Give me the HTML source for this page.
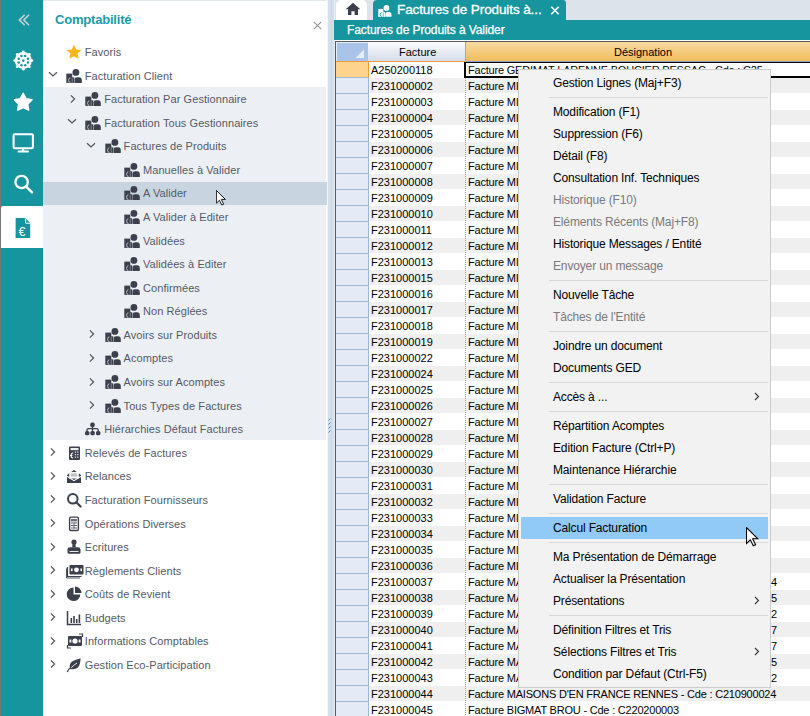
<!DOCTYPE html><html><head><meta charset="utf-8"><style>
*{margin:0;padding:0;box-sizing:border-box}
html,body{width:810px;height:716px;overflow:hidden;background:#fff;font-family:"Liberation Sans", sans-serif;position:relative}
.abs{position:absolute}
.tr{position:absolute;font-size:11px;color:#555965;white-space:nowrap;line-height:16px;letter-spacing:0.07px}
.gr{position:absolute;font-size:11px;color:#000;white-space:nowrap;line-height:16px}
.mi{position:absolute;left:553px;font-size:12px;color:#000;white-space:nowrap;line-height:22px;letter-spacing:-0.15px}
.mi.dis{color:#7a7a7a}
.sep{position:absolute;left:549px;width:219px;height:1px;background:#d7d7d7}
</style></head><body>

<div class="abs" style="left:0;top:0;width:1px;height:716px;background:#777"></div>
<div class="abs" style="left:1px;top:0;width:42px;height:716px;background:#17959e"></div>
<div class="abs" style="left:1px;top:206px;width:42px;height:42px;background:#fff;border-top-left-radius:2px"></div>
<svg class="abs" style="left:0;top:0" width="43" height="250" viewBox="0 0 43 250">
<g fill="none" stroke="#c9d3d6" stroke-width="1.6" stroke-linecap="round">
<path d="M24.2 15.3 L19.4 20 L24.2 24.7"/><path d="M28.6 15.3 L23.8 20 L28.6 24.7"/>
</g>
<g transform="translate(23.3,60.6)" fill="#fff">
<circle r="8.5"/>
<circle cx="8.60" cy="0.00" r="1.4"/><circle cx="6.08" cy="6.08" r="1.4"/><circle cx="0.00" cy="8.60" r="1.4"/><circle cx="-6.08" cy="6.08" r="1.4"/><circle cx="-8.60" cy="0.00" r="1.4"/><circle cx="-6.08" cy="-6.08" r="1.4"/><circle cx="-0.00" cy="-8.60" r="1.4"/><circle cx="6.08" cy="-6.08" r="1.4"/>
<g fill="#17959e"><circle r="1.3"/><circle cx="4.62" cy="1.91" r="1.25"/><circle cx="1.91" cy="4.62" r="1.25"/><circle cx="-1.91" cy="4.62" r="1.25"/><circle cx="-4.62" cy="1.91" r="1.25"/><circle cx="-4.62" cy="-1.91" r="1.25"/><circle cx="-1.91" cy="-4.62" r="1.25"/><circle cx="1.91" cy="-4.62" r="1.25"/><circle cx="4.62" cy="-1.91" r="1.25"/></g>
</g>
<path fill="#fff" stroke="#fff" stroke-width="1.4" stroke-linejoin="round" d="M23.20 93.30 L26.08 98.64 L32.04 99.73 L27.86 104.11 L28.67 110.12 L23.20 107.50 L17.73 110.12 L18.54 104.11 L14.36 99.73 L20.32 98.64 Z"/>
<rect x="13.6" y="134.2" width="19.3" height="14" rx="1.2" fill="none" stroke="#fff" stroke-width="2.1"/>
<rect x="22" y="148" width="2.2" height="3.5" fill="#fff"/>
<rect x="17.5" y="150.6" width="11.5" height="2" rx="1" fill="#fff"/>
<circle cx="21.6" cy="182" r="6.2" fill="none" stroke="#fff" stroke-width="2.3"/>
<line x1="26.2" y1="186.6" x2="32" y2="192.4" stroke="#fff" stroke-width="2.4" stroke-linecap="round"/>
<g>
<path d="M15.6 218 h9.6 l5 5 v15 h-14.6 z" fill="#17959e"/>
<path d="M25.6 218.6 v4.6 h4.6" fill="none" stroke="#fff" stroke-width="1"/>
<text x="18.6" y="236" font-family="Liberation Sans" font-size="12.5" fill="#fff">€</text>
</g>
</svg>
<div class="abs" style="left:55px;top:10.5px;font-size:13px;font-weight:bold;color:#1c9ba8;line-height:18px;letter-spacing:-0.2px">Comptabilité</div>
<div class="abs" style="left:312.5px;top:15.5px;width:9px;height:9px"><svg width="9" height="9"><path d="M0.8 0.8 L8.2 8.2 M8.2 0.8 L0.8 8.2" stroke="#999" stroke-width="1.2"/></svg></div>
<div class="abs" style="left:43px;top:0;width:285px;height:1px;background:#e4e9ee"></div>
<div class="abs" style="left:327px;top:0;width:1px;height:716px;background:#f3f6f9"></div>
<div class="abs" style="left:43px;top:87px;width:283px;height:353px;background:#ecf0f4"></div>
<div class="abs" style="left:43px;top:182px;width:284px;height:23px;background:#c8d5e0"></div>
<svg class="abs" style="left:65.8px;top:44px" width="16" height="16" viewBox="0 0 16 16"><path fill="#fbb316" d="M8 0.8 L10.2 5.6 L15.4 6.1 L11.5 9.6 L12.6 14.8 L8 12.2 L3.4 14.8 L4.5 9.6 L0.6 6.1 L5.8 5.6 Z"/></svg>
<div class="tr" style="left:84.8px;top:44px">Favoris</div>
<svg class="abs" style="left:47.8px;top:71.2px" width="10" height="8"><path d="M1 1.2 L5 5 L9 1.2" fill="none" stroke="#50545f" stroke-width="1.2"/></svg>
<svg class="abs" style="left:65.5px;top:69px" width="17" height="15" viewBox="0 0 17 15">
<circle cx="9.9" cy="3.4" r="3.4" fill="#3c404c"/>
<path d="M8.6 13.9 V10.6 Q8.6 8.3 11 8.3 H13 Q15.8 8.3 15.8 11.5 V13.9 Z" fill="#3c404c"/>
<path d="M0.3 4.6 H6.3 V13.9 H0.3 Z" fill="#3c404c"/>
<path d="M5.6 8.3 H8.3 V13.9 H5.6 Z" fill="#3c404c"/>
<path d="M4.4 8.8 Q2.6 8.9 2.6 11.2 Q2.6 13.4 4.4 13.5" fill="none" stroke="#b9bdc5" stroke-width="1"/>
<path d="M6.2 8.8 V13.9" stroke="#9a9ea8" stroke-width="0.7"/>
</svg>
<div class="tr" style="left:84.8px;top:68px">Facturation Client</div>
<svg class="abs" style="left:68.6px;top:93.7px" width="8" height="10"><path d="M1.9 1.3 L5.6 5 L1.9 8.7" fill="none" stroke="#50545f" stroke-width="1.2"/></svg>
<svg class="abs" style="left:85.0px;top:92px" width="17" height="15" viewBox="0 0 17 15">
<circle cx="9.9" cy="3.4" r="3.4" fill="#3c404c"/>
<path d="M8.6 13.9 V10.6 Q8.6 8.3 11 8.3 H13 Q15.8 8.3 15.8 11.5 V13.9 Z" fill="#3c404c"/>
<path d="M0.3 4.6 H6.3 V13.9 H0.3 Z" fill="#3c404c"/>
<path d="M5.6 8.3 H8.3 V13.9 H5.6 Z" fill="#3c404c"/>
<path d="M4.4 8.8 Q2.6 8.9 2.6 11.2 Q2.6 13.4 4.4 13.5" fill="none" stroke="#b9bdc5" stroke-width="1"/>
<path d="M6.2 8.8 V13.9" stroke="#9a9ea8" stroke-width="0.7"/>
</svg>
<div class="tr" style="left:104.2px;top:91px">Facturation Par Gestionnaire</div>
<svg class="abs" style="left:67.1px;top:118.3px" width="10" height="8"><path d="M1 1.2 L5 5 L9 1.2" fill="none" stroke="#50545f" stroke-width="1.2"/></svg>
<svg class="abs" style="left:85.0px;top:116px" width="17" height="15" viewBox="0 0 17 15">
<circle cx="9.9" cy="3.4" r="3.4" fill="#3c404c"/>
<path d="M8.6 13.9 V10.6 Q8.6 8.3 11 8.3 H13 Q15.8 8.3 15.8 11.5 V13.9 Z" fill="#3c404c"/>
<path d="M0.3 4.6 H6.3 V13.9 H0.3 Z" fill="#3c404c"/>
<path d="M5.6 8.3 H8.3 V13.9 H5.6 Z" fill="#3c404c"/>
<path d="M4.4 8.8 Q2.6 8.9 2.6 11.2 Q2.6 13.4 4.4 13.5" fill="none" stroke="#b9bdc5" stroke-width="1"/>
<path d="M6.2 8.8 V13.9" stroke="#9a9ea8" stroke-width="0.7"/>
</svg>
<div class="tr" style="left:104.2px;top:115px">Facturation Tous Gestionnaires</div>
<svg class="abs" style="left:86.4px;top:141.9px" width="10" height="8"><path d="M1 1.2 L5 5 L9 1.2" fill="none" stroke="#50545f" stroke-width="1.2"/></svg>
<svg class="abs" style="left:104.5px;top:139px" width="17" height="15" viewBox="0 0 17 15">
<circle cx="9.9" cy="3.4" r="3.4" fill="#3c404c"/>
<path d="M8.6 13.9 V10.6 Q8.6 8.3 11 8.3 H13 Q15.8 8.3 15.8 11.5 V13.9 Z" fill="#3c404c"/>
<path d="M0.3 4.6 H6.3 V13.9 H0.3 Z" fill="#3c404c"/>
<path d="M5.6 8.3 H8.3 V13.9 H5.6 Z" fill="#3c404c"/>
<path d="M4.4 8.8 Q2.6 8.9 2.6 11.2 Q2.6 13.4 4.4 13.5" fill="none" stroke="#b9bdc5" stroke-width="1"/>
<path d="M6.2 8.8 V13.9" stroke="#9a9ea8" stroke-width="0.7"/>
</svg>
<div class="tr" style="left:123.6px;top:138px">Factures de Produits</div>
<svg class="abs" style="left:124.0px;top:163px" width="17" height="15" viewBox="0 0 17 15">
<circle cx="9.9" cy="3.4" r="3.4" fill="#3c404c"/>
<path d="M8.6 13.9 V10.6 Q8.6 8.3 11 8.3 H13 Q15.8 8.3 15.8 11.5 V13.9 Z" fill="#3c404c"/>
<path d="M0.3 4.6 H6.3 V13.9 H0.3 Z" fill="#3c404c"/>
<path d="M5.6 8.3 H8.3 V13.9 H5.6 Z" fill="#3c404c"/>
<path d="M4.4 8.8 Q2.6 8.9 2.6 11.2 Q2.6 13.4 4.4 13.5" fill="none" stroke="#b9bdc5" stroke-width="1"/>
<path d="M6.2 8.8 V13.9" stroke="#9a9ea8" stroke-width="0.7"/>
</svg>
<div class="tr" style="left:143.0px;top:162px">Manuelles à Valider</div>
<svg class="abs" style="left:124.0px;top:186px" width="17" height="15" viewBox="0 0 17 15">
<circle cx="9.9" cy="3.4" r="3.4" fill="#3c404c"/>
<path d="M8.6 13.9 V10.6 Q8.6 8.3 11 8.3 H13 Q15.8 8.3 15.8 11.5 V13.9 Z" fill="#3c404c"/>
<path d="M0.3 4.6 H6.3 V13.9 H0.3 Z" fill="#3c404c"/>
<path d="M5.6 8.3 H8.3 V13.9 H5.6 Z" fill="#3c404c"/>
<path d="M4.4 8.8 Q2.6 8.9 2.6 11.2 Q2.6 13.4 4.4 13.5" fill="none" stroke="#b9bdc5" stroke-width="1"/>
<path d="M6.2 8.8 V13.9" stroke="#9a9ea8" stroke-width="0.7"/>
</svg>
<div class="tr" style="left:143.0px;top:185px">A Valider</div>
<svg class="abs" style="left:124.0px;top:210px" width="17" height="15" viewBox="0 0 17 15">
<circle cx="9.9" cy="3.4" r="3.4" fill="#3c404c"/>
<path d="M8.6 13.9 V10.6 Q8.6 8.3 11 8.3 H13 Q15.8 8.3 15.8 11.5 V13.9 Z" fill="#3c404c"/>
<path d="M0.3 4.6 H6.3 V13.9 H0.3 Z" fill="#3c404c"/>
<path d="M5.6 8.3 H8.3 V13.9 H5.6 Z" fill="#3c404c"/>
<path d="M4.4 8.8 Q2.6 8.9 2.6 11.2 Q2.6 13.4 4.4 13.5" fill="none" stroke="#b9bdc5" stroke-width="1"/>
<path d="M6.2 8.8 V13.9" stroke="#9a9ea8" stroke-width="0.7"/>
</svg>
<div class="tr" style="left:143.0px;top:209px">A Valider à Editer</div>
<svg class="abs" style="left:124.0px;top:234px" width="17" height="15" viewBox="0 0 17 15">
<circle cx="9.9" cy="3.4" r="3.4" fill="#3c404c"/>
<path d="M8.6 13.9 V10.6 Q8.6 8.3 11 8.3 H13 Q15.8 8.3 15.8 11.5 V13.9 Z" fill="#3c404c"/>
<path d="M0.3 4.6 H6.3 V13.9 H0.3 Z" fill="#3c404c"/>
<path d="M5.6 8.3 H8.3 V13.9 H5.6 Z" fill="#3c404c"/>
<path d="M4.4 8.8 Q2.6 8.9 2.6 11.2 Q2.6 13.4 4.4 13.5" fill="none" stroke="#b9bdc5" stroke-width="1"/>
<path d="M6.2 8.8 V13.9" stroke="#9a9ea8" stroke-width="0.7"/>
</svg>
<div class="tr" style="left:143.0px;top:233px">Validées</div>
<svg class="abs" style="left:124.0px;top:257px" width="17" height="15" viewBox="0 0 17 15">
<circle cx="9.9" cy="3.4" r="3.4" fill="#3c404c"/>
<path d="M8.6 13.9 V10.6 Q8.6 8.3 11 8.3 H13 Q15.8 8.3 15.8 11.5 V13.9 Z" fill="#3c404c"/>
<path d="M0.3 4.6 H6.3 V13.9 H0.3 Z" fill="#3c404c"/>
<path d="M5.6 8.3 H8.3 V13.9 H5.6 Z" fill="#3c404c"/>
<path d="M4.4 8.8 Q2.6 8.9 2.6 11.2 Q2.6 13.4 4.4 13.5" fill="none" stroke="#b9bdc5" stroke-width="1"/>
<path d="M6.2 8.8 V13.9" stroke="#9a9ea8" stroke-width="0.7"/>
</svg>
<div class="tr" style="left:143.0px;top:256px">Validées à Editer</div>
<svg class="abs" style="left:124.0px;top:281px" width="17" height="15" viewBox="0 0 17 15">
<circle cx="9.9" cy="3.4" r="3.4" fill="#3c404c"/>
<path d="M8.6 13.9 V10.6 Q8.6 8.3 11 8.3 H13 Q15.8 8.3 15.8 11.5 V13.9 Z" fill="#3c404c"/>
<path d="M0.3 4.6 H6.3 V13.9 H0.3 Z" fill="#3c404c"/>
<path d="M5.6 8.3 H8.3 V13.9 H5.6 Z" fill="#3c404c"/>
<path d="M4.4 8.8 Q2.6 8.9 2.6 11.2 Q2.6 13.4 4.4 13.5" fill="none" stroke="#b9bdc5" stroke-width="1"/>
<path d="M6.2 8.8 V13.9" stroke="#9a9ea8" stroke-width="0.7"/>
</svg>
<div class="tr" style="left:143.0px;top:280px">Confirmées</div>
<svg class="abs" style="left:124.0px;top:304px" width="17" height="15" viewBox="0 0 17 15">
<circle cx="9.9" cy="3.4" r="3.4" fill="#3c404c"/>
<path d="M8.6 13.9 V10.6 Q8.6 8.3 11 8.3 H13 Q15.8 8.3 15.8 11.5 V13.9 Z" fill="#3c404c"/>
<path d="M0.3 4.6 H6.3 V13.9 H0.3 Z" fill="#3c404c"/>
<path d="M5.6 8.3 H8.3 V13.9 H5.6 Z" fill="#3c404c"/>
<path d="M4.4 8.8 Q2.6 8.9 2.6 11.2 Q2.6 13.4 4.4 13.5" fill="none" stroke="#b9bdc5" stroke-width="1"/>
<path d="M6.2 8.8 V13.9" stroke="#9a9ea8" stroke-width="0.7"/>
</svg>
<div class="tr" style="left:143.0px;top:303px">Non Réglées</div>
<svg class="abs" style="left:87.9px;top:329.4px" width="8" height="10"><path d="M1.9 1.3 L5.6 5 L1.9 8.7" fill="none" stroke="#50545f" stroke-width="1.2"/></svg>
<svg class="abs" style="left:104.5px;top:328px" width="17" height="15" viewBox="0 0 17 15">
<circle cx="9.9" cy="3.4" r="3.4" fill="#3c404c"/>
<path d="M8.6 13.9 V10.6 Q8.6 8.3 11 8.3 H13 Q15.8 8.3 15.8 11.5 V13.9 Z" fill="#3c404c"/>
<path d="M0.3 4.6 H6.3 V13.9 H0.3 Z" fill="#3c404c"/>
<path d="M5.6 8.3 H8.3 V13.9 H5.6 Z" fill="#3c404c"/>
<path d="M4.4 8.8 Q2.6 8.9 2.6 11.2 Q2.6 13.4 4.4 13.5" fill="none" stroke="#b9bdc5" stroke-width="1"/>
<path d="M6.2 8.8 V13.9" stroke="#9a9ea8" stroke-width="0.7"/>
</svg>
<div class="tr" style="left:123.6px;top:327px">Avoirs sur Produits</div>
<svg class="abs" style="left:87.9px;top:353.0px" width="8" height="10"><path d="M1.9 1.3 L5.6 5 L1.9 8.7" fill="none" stroke="#50545f" stroke-width="1.2"/></svg>
<svg class="abs" style="left:104.5px;top:351px" width="17" height="15" viewBox="0 0 17 15">
<circle cx="9.9" cy="3.4" r="3.4" fill="#3c404c"/>
<path d="M8.6 13.9 V10.6 Q8.6 8.3 11 8.3 H13 Q15.8 8.3 15.8 11.5 V13.9 Z" fill="#3c404c"/>
<path d="M0.3 4.6 H6.3 V13.9 H0.3 Z" fill="#3c404c"/>
<path d="M5.6 8.3 H8.3 V13.9 H5.6 Z" fill="#3c404c"/>
<path d="M4.4 8.8 Q2.6 8.9 2.6 11.2 Q2.6 13.4 4.4 13.5" fill="none" stroke="#b9bdc5" stroke-width="1"/>
<path d="M6.2 8.8 V13.9" stroke="#9a9ea8" stroke-width="0.7"/>
</svg>
<div class="tr" style="left:123.6px;top:350px">Acomptes</div>
<svg class="abs" style="left:87.9px;top:376.6px" width="8" height="10"><path d="M1.9 1.3 L5.6 5 L1.9 8.7" fill="none" stroke="#50545f" stroke-width="1.2"/></svg>
<svg class="abs" style="left:104.5px;top:375px" width="17" height="15" viewBox="0 0 17 15">
<circle cx="9.9" cy="3.4" r="3.4" fill="#3c404c"/>
<path d="M8.6 13.9 V10.6 Q8.6 8.3 11 8.3 H13 Q15.8 8.3 15.8 11.5 V13.9 Z" fill="#3c404c"/>
<path d="M0.3 4.6 H6.3 V13.9 H0.3 Z" fill="#3c404c"/>
<path d="M5.6 8.3 H8.3 V13.9 H5.6 Z" fill="#3c404c"/>
<path d="M4.4 8.8 Q2.6 8.9 2.6 11.2 Q2.6 13.4 4.4 13.5" fill="none" stroke="#b9bdc5" stroke-width="1"/>
<path d="M6.2 8.8 V13.9" stroke="#9a9ea8" stroke-width="0.7"/>
</svg>
<div class="tr" style="left:123.6px;top:374px">Avoirs sur Acomptes</div>
<svg class="abs" style="left:87.9px;top:400.1px" width="8" height="10"><path d="M1.9 1.3 L5.6 5 L1.9 8.7" fill="none" stroke="#50545f" stroke-width="1.2"/></svg>
<svg class="abs" style="left:104.5px;top:399px" width="17" height="15" viewBox="0 0 17 15">
<circle cx="9.9" cy="3.4" r="3.4" fill="#3c404c"/>
<path d="M8.6 13.9 V10.6 Q8.6 8.3 11 8.3 H13 Q15.8 8.3 15.8 11.5 V13.9 Z" fill="#3c404c"/>
<path d="M0.3 4.6 H6.3 V13.9 H0.3 Z" fill="#3c404c"/>
<path d="M5.6 8.3 H8.3 V13.9 H5.6 Z" fill="#3c404c"/>
<path d="M4.4 8.8 Q2.6 8.9 2.6 11.2 Q2.6 13.4 4.4 13.5" fill="none" stroke="#b9bdc5" stroke-width="1"/>
<path d="M6.2 8.8 V13.9" stroke="#9a9ea8" stroke-width="0.7"/>
</svg>
<div class="tr" style="left:123.6px;top:398px">Tous Types de Factures</div>
<svg class="abs" style="left:85.3px;top:421px" width="16" height="16" viewBox="0 0 16 16" fill="#3c404c"><rect x="5.3" y="1.6" width="4.4" height="4.4" rx="1.6"/><rect x="0" y="9.9" width="4.4" height="4.4" rx="1.6"/><rect x="5.4" y="9.9" width="4.4" height="4.4" rx="1.6"/><rect x="11" y="9.9" width="4.4" height="4.4" rx="1.6"/><path d="M7.5 5 V10 M2 10.5 V9 Q2 7.6 3.4 7.6 H11.8 Q13.2 7.6 13.2 9 V10.5" stroke="#3c404c" stroke-width="1.3" fill="none"/></svg>
<div class="tr" style="left:104.2px;top:421px">Hiérarchies Défaut Factures</div>
<svg class="abs" style="left:49.3px;top:447.3px" width="8" height="10"><path d="M1.9 1.3 L5.6 5 L1.9 8.7" fill="none" stroke="#50545f" stroke-width="1.2"/></svg>
<svg class="abs" style="left:65.8px;top:445px" width="16" height="16" viewBox="0 0 16 16" fill="#3c404c"><rect x="3" y="1.5" width="11" height="13.5" rx="1"/><rect x="4.5" y="3" width="8" height="2.2" fill="#fff" opacity="0.9"/><g fill="#fff" opacity="0.85"><rect x="8.8" y="6.5" width="1.3" height="1.3"/><rect x="11.2" y="6.5" width="1.3" height="1.3"/><rect x="8.8" y="9" width="1.3" height="1.3"/><rect x="11.2" y="9" width="1.3" height="1.3"/><rect x="8.8" y="11.5" width="1.3" height="1.3"/><rect x="11.2" y="11.5" width="1.3" height="1.3"/></g><path d="M7.2 8 Q5 8 5 10.5 Q5 13 7.2 13" stroke="#fff" fill="none" stroke-width="1.1"/><rect x="4" y="10" width="2.5" height="0.9" fill="#fff"/></svg>
<div class="tr" style="left:84.8px;top:445px">Relevés de Factures</div>
<svg class="abs" style="left:49.3px;top:470.8px" width="8" height="10"><path d="M1.9 1.3 L5.6 5 L1.9 8.7" fill="none" stroke="#50545f" stroke-width="1.2"/></svg>
<svg class="abs" style="left:65.8px;top:468px" width="16" height="16" viewBox="0 0 16 16"><path d="M1 7 L8 2 L15 7 V15 H1 Z" fill="#3c404c"/><rect x="3.2" y="4" width="9.6" height="6.5" fill="#fff"/><rect x="4.8" y="5.6" width="6.4" height="1" fill="#999"/><rect x="4.8" y="7.4" width="6.4" height="1" fill="#999"/><path d="M1 8.2 L8 12.6 L15 8.2" stroke="#fff" fill="none" stroke-width="1.1"/></svg>
<div class="tr" style="left:84.8px;top:468px">Relances</div>
<svg class="abs" style="left:49.3px;top:494.4px" width="8" height="10"><path d="M1.9 1.3 L5.6 5 L1.9 8.7" fill="none" stroke="#50545f" stroke-width="1.2"/></svg>
<svg class="abs" style="left:65.8px;top:492px" width="16" height="16" viewBox="0 0 16 16"><circle cx="6.8" cy="6.8" r="4.8" fill="none" stroke="#3c404c" stroke-width="2"/><line x1="10.3" y1="10.3" x2="14.5" y2="14.5" stroke="#3c404c" stroke-width="2.2" stroke-linecap="round"/></svg>
<div class="tr" style="left:84.8px;top:492px">Facturation Fournisseurs</div>
<svg class="abs" style="left:49.3px;top:518.0px" width="8" height="10"><path d="M1.9 1.3 L5.6 5 L1.9 8.7" fill="none" stroke="#50545f" stroke-width="1.2"/></svg>
<svg class="abs" style="left:65.8px;top:516px" width="16" height="16" viewBox="0 0 16 16"><rect x="3.6" y="1.1" width="8.8" height="13.4" rx="1.2" fill="none" stroke="#3c404c" stroke-width="1.4"/><rect x="5" y="3" width="6" height="2.4" fill="#3c404c" opacity="0.75"/><g fill="#3c404c" opacity="0.8"><rect x="5" y="6.5" width="6" height="1"/><rect x="5" y="9" width="6" height="1"/><rect x="5" y="11.5" width="6" height="1"/><rect x="7.5" y="6.5" width="1" height="6"/></g></svg>
<div class="tr" style="left:84.8px;top:516px">Opérations Diverses</div>
<svg class="abs" style="left:49.3px;top:541.6px" width="8" height="10"><path d="M1.9 1.3 L5.6 5 L1.9 8.7" fill="none" stroke="#50545f" stroke-width="1.2"/></svg>
<svg class="abs" style="left:65.8px;top:539px" width="16" height="16" viewBox="0 0 16 16" fill="#3c404c"><circle cx="8" cy="3" r="2.6"/><path d="M6.6 4.5 H9.4 L9.8 8.6 H6.2 Z"/><path d="M1.5 10.5 Q1.5 8.3 4 8.3 H12 Q14.5 8.3 14.5 10.5 V13.5 Q14.5 14.8 13 14.8 H3 Q1.5 14.8 1.5 13.5 Z"/><rect x="3.5" y="12" width="9" height="0.9" fill="#fff"/></svg>
<div class="tr" style="left:84.8px;top:539px">Ecritures</div>
<svg class="abs" style="left:49.3px;top:565.1px" width="8" height="10"><path d="M1.9 1.3 L5.6 5 L1.9 8.7" fill="none" stroke="#50545f" stroke-width="1.2"/></svg>
<svg class="abs" style="left:65.8px;top:563px" width="18" height="16" viewBox="0 0 18 16" fill="#3c404c"><rect x="3.5" y="2" width="14" height="9.5" rx="0.8"/><circle cx="10.5" cy="6.8" r="2.4" fill="#fff"/><rect x="5" y="5.5" width="1.6" height="2.6" fill="#fff"/><rect x="14.4" y="5.5" width="1.6" height="2.6" fill="#fff"/><path d="M1.5 4 V13.5 H15.5" fill="none" stroke="#3c404c" stroke-width="1.2"/><path d="M0.5 5.5 V15 H14" fill="none" stroke="#3c404c" stroke-width="0.9"/></svg>
<div class="tr" style="left:84.8px;top:563px">Règlements Clients</div>
<svg class="abs" style="left:49.3px;top:588.7px" width="8" height="10"><path d="M1.9 1.3 L5.6 5 L1.9 8.7" fill="none" stroke="#50545f" stroke-width="1.2"/></svg>
<svg class="abs" style="left:65.8px;top:586px" width="16" height="16" viewBox="0 0 16 16" fill="#3c404c"><path d="M7.5 1.5 A6.8 6.8 0 1 0 14.3 8.5 H7.5 Z"/><path d="M9 0.5 A6.5 6.5 0 0 1 15.5 7 H9 Z"/></svg>
<div class="tr" style="left:84.8px;top:586px">Coûts de Revient</div>
<svg class="abs" style="left:49.3px;top:612.3px" width="8" height="10"><path d="M1.9 1.3 L5.6 5 L1.9 8.7" fill="none" stroke="#50545f" stroke-width="1.2"/></svg>
<svg class="abs" style="left:65.8px;top:610px" width="16" height="16" viewBox="0 0 16 16" fill="#3c404c"><path d="M1.5 1 V14.5 H15" fill="none" stroke="#3c404c" stroke-width="1.5"/><rect x="4.5" y="8" width="1.6" height="5"/><rect x="7.2" y="6" width="1.6" height="7"/><rect x="9.9" y="9" width="1.6" height="4"/><rect x="12.6" y="4.5" width="1.6" height="8.5"/></svg>
<div class="tr" style="left:84.8px;top:610px">Budgets</div>
<svg class="abs" style="left:49.3px;top:635.9px" width="8" height="10"><path d="M1.9 1.3 L5.6 5 L1.9 8.7" fill="none" stroke="#50545f" stroke-width="1.2"/></svg>
<svg class="abs" style="left:65.8px;top:633px" width="18" height="16" viewBox="0 0 18 16" fill="#3c404c"><rect x="2" y="3" width="14" height="10" rx="1"/><circle cx="9" cy="8" r="2.6" fill="#fff"/><rect x="3.5" y="6.5" width="1.8" height="3" fill="#fff"/><rect x="12.7" y="6.5" width="1.8" height="3" fill="#fff"/><path d="M13 1 L16.5 1 L16.5 4" stroke="#3c404c" fill="none" stroke-width="1.2"/><path d="M5 15 L1.5 15 L1.5 12" stroke="#3c404c" fill="none" stroke-width="1.2"/></svg>
<div class="tr" style="left:84.8px;top:633px">Informations Comptables</div>
<svg class="abs" style="left:49.3px;top:659.4px" width="8" height="10"><path d="M1.9 1.3 L5.6 5 L1.9 8.7" fill="none" stroke="#50545f" stroke-width="1.2"/></svg>
<svg class="abs" style="left:65.8px;top:657px" width="16" height="16" viewBox="0 0 16 16" fill="#3c404c"><path d="M4 12 Q2.5 6 7.5 3.8 Q10.5 2.6 14.5 1.5 Q14.5 7.5 12 10.2 Q9 13.2 4 12 Z"/><path d="M1.2 15 Q4 9.5 11 5.5" stroke="#3c404c" stroke-width="1.3" fill="none"/><path d="M5.2 10.8 Q7.5 8.2 11 6" stroke="#fff" stroke-width="0.9" fill="none"/></svg>
<div class="tr" style="left:84.8px;top:657px">Gestion Eco-Participation</div>
<div class="abs" style="left:328px;top:0;width:7px;height:716px;background:#d7dfe8"></div>
<div class="abs" style="left:331px;top:0;width:1px;height:716px;background:#c4daf4"></div>
<div class="abs" style="left:334px;top:0;width:1px;height:716px;background:#e8edf2"></div>
<svg class="abs" style="left:328px;top:418px" width="4" height="16"><path d="M0.5 2.5 L2.5 0.5" stroke="#3c7fe0" stroke-width="1"/><path d="M0.5 6.5 L2.5 4.5" stroke="#3c7fe0" stroke-width="1"/><path d="M0.5 10.5 L2.5 8.5" stroke="#3c7fe0" stroke-width="1"/><path d="M0.5 14.5 L2.5 12.5" stroke="#3c7fe0" stroke-width="1"/></svg>
<div class="abs" style="left:335px;top:0;width:475px;height:20px;background:#dce3eb"></div>
<div class="abs" style="left:336px;top:0;width:31px;height:20px;background:#fff;border-radius:5px 5px 0 0"></div>
<svg class="abs" style="left:345px;top:2px" width="16" height="14" viewBox="0 0 16 14"><path d="M8 0.8 L15.3 7.2 H13 V13 H9.6 V9.3 H6.4 V13 H3 V7.2 H0.7 Z" fill="#3c404c"/></svg>
<div class="abs" style="left:373px;top:0;width:193px;height:21px;background:#17959e;border-radius:4px 3px 0 0"></div>
<svg class="abs" style="left:378px;top:5px" width="14.5" height="12.8" viewBox="0 0 17 15"><circle cx="9.9" cy="3.4" r="3.4" fill="#fff"/><path d="M8.6 13.9 V10.6 Q8.6 8.3 11 8.3 H13 Q15.8 8.3 15.8 11.5 V13.9 Z" fill="#fff"/><path d="M0.3 4.6 H6.3 V13.9 H0.3 Z" fill="#fff"/><path d="M5.6 8.3 H8.3 V13.9 H5.6 Z" fill="#fff"/><path d="M4.4 8.8 Q2.6 8.9 2.6 11.2 Q2.6 13.4 4.4 13.5" fill="none" stroke="#17959e" stroke-width="1"/><path d="M6.2 8.8 V13.9" stroke="#17959e" stroke-width="0.7"/></svg>
<div class="abs" style="left:397px;top:1px;font-size:13.5px;color:#fff;line-height:18px;white-space:nowrap;letter-spacing:-0.1px;-webkit-text-stroke:0.3px #fff">Factures de Produits à...</div>
<svg class="abs" style="left:550px;top:6px" width="10" height="9"><path d="M1.3 0.8 L8.7 8.2 M8.7 0.8 L1.3 8.2" stroke="#fff" stroke-width="1.5"/></svg>
<div class="abs" style="left:334px;top:20px;width:476px;height:20px;background:#17959e"></div>
<div class="abs" style="left:347px;top:22px;font-size:12px;color:#fff;line-height:16px;white-space:nowrap;letter-spacing:-0.1px;-webkit-text-stroke:0.25px #fff">Factures de Produits à Valider</div>
<div class="abs" style="left:335px;top:40px;width:475px;height:676px;background:#fff"></div>
<div class="abs" style="left:335px;top:41px;width:475px;height:1px;background:#5a5a5a"></div>
<div class="abs" style="left:335px;top:41px;width:1px;height:675px;background:#5a5a5a"></div>
<div class="abs" style="left:336px;top:42px;width:32px;height:19px;background:#a9c4e8;border-top:1px solid #e6eefa;border-left:1px solid #e6eefa"></div>
<svg class="abs" style="left:355px;top:49px" width="10" height="10"><path d="M9 0.5 V9 H0.5 Z" fill="#e8eef8"/></svg>
<div class="abs" style="left:368px;top:42px;width:97px;height:19px;background:linear-gradient(#fbfcfd,#d3dce8)"></div>
<div class="abs" style="left:336px;top:61px;width:130px;height:1px;background:#f29a3a"></div>
<div class="abs" style="left:465px;top:42px;width:1px;height:20px;background:#f29a3a"></div>
<div class="abs" style="left:466px;top:42px;width:344px;height:19px;background:linear-gradient(#f9d9a0,#efbd5e)"></div>
<div class="abs" style="left:466px;top:61px;width:344px;height:1px;background:#87a2c0"></div>
<div class="gr" style="left:399px;top:44px">Facture</div>
<div class="gr" style="left:614px;top:44px">Désignation</div>
<div class="abs" style="left:336px;top:62px;width:33px;height:16px;background:#fdd38d;border-right:1px solid #f29a3a;border-bottom:1px solid #9fb8d3"></div>
<div class="gr" style="left:371px;top:62px">A250200118</div>
<div class="gr" style="left:468px;top:62px;letter-spacing:-0.2px">Facture GEDIMAT LARENNE BOUCIER PESSAC - Cde : C25</div>
<div class="abs" style="left:368px;top:78px;width:442px;height:15px;background:#efefef"></div>
<div class="abs" style="left:336px;top:78px;width:33px;height:16px;background:#e4ebf7;border-right:1px solid #9fb8d3;border-bottom:1px solid #9fb8d3"></div>
<div class="gr" style="left:371px;top:78px">F231000002</div>
<div class="gr" style="left:468px;top:78px;letter-spacing:-0.2px">Facture MI</div>
<div class="abs" style="left:336px;top:94px;width:33px;height:16px;background:#e4ebf7;border-right:1px solid #9fb8d3;border-bottom:1px solid #9fb8d3"></div>
<div class="gr" style="left:371px;top:94px">F231000003</div>
<div class="gr" style="left:468px;top:94px;letter-spacing:-0.2px">Facture MI</div>
<div class="abs" style="left:368px;top:110px;width:442px;height:15px;background:#efefef"></div>
<div class="abs" style="left:336px;top:110px;width:33px;height:16px;background:#e4ebf7;border-right:1px solid #9fb8d3;border-bottom:1px solid #9fb8d3"></div>
<div class="gr" style="left:371px;top:110px">F231000004</div>
<div class="gr" style="left:468px;top:110px;letter-spacing:-0.2px">Facture MI</div>
<div class="abs" style="left:336px;top:126px;width:33px;height:16px;background:#e4ebf7;border-right:1px solid #9fb8d3;border-bottom:1px solid #9fb8d3"></div>
<div class="gr" style="left:371px;top:126px">F231000005</div>
<div class="gr" style="left:468px;top:126px;letter-spacing:-0.2px">Facture MI</div>
<div class="abs" style="left:368px;top:142px;width:442px;height:15px;background:#efefef"></div>
<div class="abs" style="left:336px;top:142px;width:33px;height:16px;background:#e4ebf7;border-right:1px solid #9fb8d3;border-bottom:1px solid #9fb8d3"></div>
<div class="gr" style="left:371px;top:142px">F231000006</div>
<div class="gr" style="left:468px;top:142px;letter-spacing:-0.2px">Facture MI</div>
<div class="abs" style="left:336px;top:158px;width:33px;height:16px;background:#e4ebf7;border-right:1px solid #9fb8d3;border-bottom:1px solid #9fb8d3"></div>
<div class="gr" style="left:371px;top:158px">F231000007</div>
<div class="gr" style="left:468px;top:158px;letter-spacing:-0.2px">Facture MI</div>
<div class="abs" style="left:368px;top:174px;width:442px;height:15px;background:#efefef"></div>
<div class="abs" style="left:336px;top:174px;width:33px;height:16px;background:#e4ebf7;border-right:1px solid #9fb8d3;border-bottom:1px solid #9fb8d3"></div>
<div class="gr" style="left:371px;top:174px">F231000008</div>
<div class="gr" style="left:468px;top:174px;letter-spacing:-0.2px">Facture MI</div>
<div class="abs" style="left:336px;top:190px;width:33px;height:16px;background:#e4ebf7;border-right:1px solid #9fb8d3;border-bottom:1px solid #9fb8d3"></div>
<div class="gr" style="left:371px;top:190px">F231000009</div>
<div class="gr" style="left:468px;top:190px;letter-spacing:-0.2px">Facture MI</div>
<div class="abs" style="left:368px;top:206px;width:442px;height:15px;background:#efefef"></div>
<div class="abs" style="left:336px;top:206px;width:33px;height:16px;background:#e4ebf7;border-right:1px solid #9fb8d3;border-bottom:1px solid #9fb8d3"></div>
<div class="gr" style="left:371px;top:206px">F231000010</div>
<div class="gr" style="left:468px;top:206px;letter-spacing:-0.2px">Facture MI</div>
<div class="abs" style="left:336px;top:222px;width:33px;height:16px;background:#e4ebf7;border-right:1px solid #9fb8d3;border-bottom:1px solid #9fb8d3"></div>
<div class="gr" style="left:371px;top:222px">F231000011</div>
<div class="gr" style="left:468px;top:222px;letter-spacing:-0.2px">Facture MI</div>
<div class="abs" style="left:368px;top:238px;width:442px;height:15px;background:#efefef"></div>
<div class="abs" style="left:336px;top:238px;width:33px;height:16px;background:#e4ebf7;border-right:1px solid #9fb8d3;border-bottom:1px solid #9fb8d3"></div>
<div class="gr" style="left:371px;top:238px">F231000012</div>
<div class="gr" style="left:468px;top:238px;letter-spacing:-0.2px">Facture MI</div>
<div class="abs" style="left:336px;top:254px;width:33px;height:16px;background:#e4ebf7;border-right:1px solid #9fb8d3;border-bottom:1px solid #9fb8d3"></div>
<div class="gr" style="left:371px;top:254px">F231000013</div>
<div class="gr" style="left:468px;top:254px;letter-spacing:-0.2px">Facture MI</div>
<div class="abs" style="left:368px;top:270px;width:442px;height:15px;background:#efefef"></div>
<div class="abs" style="left:336px;top:270px;width:33px;height:16px;background:#e4ebf7;border-right:1px solid #9fb8d3;border-bottom:1px solid #9fb8d3"></div>
<div class="gr" style="left:371px;top:270px">F231000015</div>
<div class="gr" style="left:468px;top:270px;letter-spacing:-0.2px">Facture MI</div>
<div class="abs" style="left:336px;top:286px;width:33px;height:16px;background:#e4ebf7;border-right:1px solid #9fb8d3;border-bottom:1px solid #9fb8d3"></div>
<div class="gr" style="left:371px;top:286px">F231000016</div>
<div class="gr" style="left:468px;top:286px;letter-spacing:-0.2px">Facture MI</div>
<div class="abs" style="left:368px;top:302px;width:442px;height:15px;background:#efefef"></div>
<div class="abs" style="left:336px;top:302px;width:33px;height:16px;background:#e4ebf7;border-right:1px solid #9fb8d3;border-bottom:1px solid #9fb8d3"></div>
<div class="gr" style="left:371px;top:302px">F231000017</div>
<div class="gr" style="left:468px;top:302px;letter-spacing:-0.2px">Facture MI</div>
<div class="abs" style="left:336px;top:318px;width:33px;height:16px;background:#e4ebf7;border-right:1px solid #9fb8d3;border-bottom:1px solid #9fb8d3"></div>
<div class="gr" style="left:371px;top:318px">F231000018</div>
<div class="gr" style="left:468px;top:318px;letter-spacing:-0.2px">Facture MI</div>
<div class="abs" style="left:368px;top:334px;width:442px;height:15px;background:#efefef"></div>
<div class="abs" style="left:336px;top:334px;width:33px;height:16px;background:#e4ebf7;border-right:1px solid #9fb8d3;border-bottom:1px solid #9fb8d3"></div>
<div class="gr" style="left:371px;top:334px">F231000019</div>
<div class="gr" style="left:468px;top:334px;letter-spacing:-0.2px">Facture MI</div>
<div class="abs" style="left:336px;top:350px;width:33px;height:16px;background:#e4ebf7;border-right:1px solid #9fb8d3;border-bottom:1px solid #9fb8d3"></div>
<div class="gr" style="left:371px;top:350px">F231000022</div>
<div class="gr" style="left:468px;top:350px;letter-spacing:-0.2px">Facture MI</div>
<div class="abs" style="left:368px;top:366px;width:442px;height:15px;background:#efefef"></div>
<div class="abs" style="left:336px;top:366px;width:33px;height:16px;background:#e4ebf7;border-right:1px solid #9fb8d3;border-bottom:1px solid #9fb8d3"></div>
<div class="gr" style="left:371px;top:366px">F231000024</div>
<div class="gr" style="left:468px;top:366px;letter-spacing:-0.2px">Facture MI</div>
<div class="abs" style="left:336px;top:382px;width:33px;height:16px;background:#e4ebf7;border-right:1px solid #9fb8d3;border-bottom:1px solid #9fb8d3"></div>
<div class="gr" style="left:371px;top:382px">F231000025</div>
<div class="gr" style="left:468px;top:382px;letter-spacing:-0.2px">Facture MI</div>
<div class="abs" style="left:368px;top:398px;width:442px;height:15px;background:#efefef"></div>
<div class="abs" style="left:336px;top:398px;width:33px;height:16px;background:#e4ebf7;border-right:1px solid #9fb8d3;border-bottom:1px solid #9fb8d3"></div>
<div class="gr" style="left:371px;top:398px">F231000026</div>
<div class="gr" style="left:468px;top:398px;letter-spacing:-0.2px">Facture MI</div>
<div class="abs" style="left:336px;top:414px;width:33px;height:16px;background:#e4ebf7;border-right:1px solid #9fb8d3;border-bottom:1px solid #9fb8d3"></div>
<div class="gr" style="left:371px;top:414px">F231000027</div>
<div class="gr" style="left:468px;top:414px;letter-spacing:-0.2px">Facture MI</div>
<div class="abs" style="left:368px;top:430px;width:442px;height:15px;background:#efefef"></div>
<div class="abs" style="left:336px;top:430px;width:33px;height:16px;background:#e4ebf7;border-right:1px solid #9fb8d3;border-bottom:1px solid #9fb8d3"></div>
<div class="gr" style="left:371px;top:430px">F231000028</div>
<div class="gr" style="left:468px;top:430px;letter-spacing:-0.2px">Facture MI</div>
<div class="abs" style="left:336px;top:446px;width:33px;height:16px;background:#e4ebf7;border-right:1px solid #9fb8d3;border-bottom:1px solid #9fb8d3"></div>
<div class="gr" style="left:371px;top:446px">F231000029</div>
<div class="gr" style="left:468px;top:446px;letter-spacing:-0.2px">Facture MI</div>
<div class="abs" style="left:368px;top:462px;width:442px;height:15px;background:#efefef"></div>
<div class="abs" style="left:336px;top:462px;width:33px;height:16px;background:#e4ebf7;border-right:1px solid #9fb8d3;border-bottom:1px solid #9fb8d3"></div>
<div class="gr" style="left:371px;top:462px">F231000030</div>
<div class="gr" style="left:468px;top:462px;letter-spacing:-0.2px">Facture MI</div>
<div class="abs" style="left:336px;top:478px;width:33px;height:16px;background:#e4ebf7;border-right:1px solid #9fb8d3;border-bottom:1px solid #9fb8d3"></div>
<div class="gr" style="left:371px;top:478px">F231000031</div>
<div class="gr" style="left:468px;top:478px;letter-spacing:-0.2px">Facture MI</div>
<div class="abs" style="left:368px;top:494px;width:442px;height:15px;background:#efefef"></div>
<div class="abs" style="left:336px;top:494px;width:33px;height:16px;background:#e4ebf7;border-right:1px solid #9fb8d3;border-bottom:1px solid #9fb8d3"></div>
<div class="gr" style="left:371px;top:494px">F231000032</div>
<div class="gr" style="left:468px;top:494px;letter-spacing:-0.2px">Facture MI</div>
<div class="abs" style="left:336px;top:510px;width:33px;height:16px;background:#e4ebf7;border-right:1px solid #9fb8d3;border-bottom:1px solid #9fb8d3"></div>
<div class="gr" style="left:371px;top:510px">F231000033</div>
<div class="gr" style="left:468px;top:510px;letter-spacing:-0.2px">Facture MI</div>
<div class="abs" style="left:368px;top:526px;width:442px;height:15px;background:#efefef"></div>
<div class="abs" style="left:336px;top:526px;width:33px;height:16px;background:#e4ebf7;border-right:1px solid #9fb8d3;border-bottom:1px solid #9fb8d3"></div>
<div class="gr" style="left:371px;top:526px">F231000034</div>
<div class="gr" style="left:468px;top:526px;letter-spacing:-0.2px">Facture MI</div>
<div class="abs" style="left:336px;top:542px;width:33px;height:16px;background:#e4ebf7;border-right:1px solid #9fb8d3;border-bottom:1px solid #9fb8d3"></div>
<div class="gr" style="left:371px;top:542px">F231000035</div>
<div class="gr" style="left:468px;top:542px;letter-spacing:-0.2px">Facture MI</div>
<div class="abs" style="left:368px;top:558px;width:442px;height:15px;background:#efefef"></div>
<div class="abs" style="left:336px;top:558px;width:33px;height:16px;background:#e4ebf7;border-right:1px solid #9fb8d3;border-bottom:1px solid #9fb8d3"></div>
<div class="gr" style="left:371px;top:558px">F231000036</div>
<div class="gr" style="left:468px;top:558px;letter-spacing:-0.2px">Facture MI</div>
<div class="abs" style="left:336px;top:574px;width:33px;height:16px;background:#e4ebf7;border-right:1px solid #9fb8d3;border-bottom:1px solid #9fb8d3"></div>
<div class="gr" style="left:371px;top:574px">F231000037</div>
<div class="gr" style="left:468px;top:574px;letter-spacing:-0.2px">Facture MA</div>
<div class="gr" style="left:771px;top:574px">4</div>
<div class="abs" style="left:368px;top:590px;width:442px;height:15px;background:#efefef"></div>
<div class="abs" style="left:336px;top:590px;width:33px;height:16px;background:#e4ebf7;border-right:1px solid #9fb8d3;border-bottom:1px solid #9fb8d3"></div>
<div class="gr" style="left:371px;top:590px">F231000038</div>
<div class="gr" style="left:468px;top:590px;letter-spacing:-0.2px">Facture MA</div>
<div class="gr" style="left:771px;top:590px">5</div>
<div class="abs" style="left:336px;top:606px;width:33px;height:16px;background:#e4ebf7;border-right:1px solid #9fb8d3;border-bottom:1px solid #9fb8d3"></div>
<div class="gr" style="left:371px;top:606px">F231000039</div>
<div class="gr" style="left:468px;top:606px;letter-spacing:-0.2px">Facture MA</div>
<div class="gr" style="left:771px;top:606px">2</div>
<div class="abs" style="left:368px;top:622px;width:442px;height:15px;background:#efefef"></div>
<div class="abs" style="left:336px;top:622px;width:33px;height:16px;background:#e4ebf7;border-right:1px solid #9fb8d3;border-bottom:1px solid #9fb8d3"></div>
<div class="gr" style="left:371px;top:622px">F231000040</div>
<div class="gr" style="left:468px;top:622px;letter-spacing:-0.2px">Facture MA</div>
<div class="gr" style="left:771px;top:622px">7</div>
<div class="abs" style="left:336px;top:638px;width:33px;height:16px;background:#e4ebf7;border-right:1px solid #9fb8d3;border-bottom:1px solid #9fb8d3"></div>
<div class="gr" style="left:371px;top:638px">F231000041</div>
<div class="gr" style="left:468px;top:638px;letter-spacing:-0.2px">Facture MA</div>
<div class="gr" style="left:771px;top:638px">7</div>
<div class="abs" style="left:368px;top:654px;width:442px;height:15px;background:#efefef"></div>
<div class="abs" style="left:336px;top:654px;width:33px;height:16px;background:#e4ebf7;border-right:1px solid #9fb8d3;border-bottom:1px solid #9fb8d3"></div>
<div class="gr" style="left:371px;top:654px">F231000042</div>
<div class="gr" style="left:468px;top:654px;letter-spacing:-0.2px">Facture MA</div>
<div class="gr" style="left:771px;top:654px">5</div>
<div class="abs" style="left:336px;top:670px;width:33px;height:16px;background:#e4ebf7;border-right:1px solid #9fb8d3;border-bottom:1px solid #9fb8d3"></div>
<div class="gr" style="left:371px;top:670px">F231000043</div>
<div class="gr" style="left:468px;top:670px;letter-spacing:-0.2px">Facture MA</div>
<div class="gr" style="left:771px;top:670px">2</div>
<div class="abs" style="left:368px;top:686px;width:442px;height:15px;background:#efefef"></div>
<div class="abs" style="left:336px;top:686px;width:33px;height:16px;background:#e4ebf7;border-right:1px solid #9fb8d3;border-bottom:1px solid #9fb8d3"></div>
<div class="gr" style="left:371px;top:686px">F231000044</div>
<div class="gr" style="left:468px;top:686px;letter-spacing:-0.2px">Facture MAISONS D'EN FRANCE RENNES - Cde : C210900024</div>
<div class="abs" style="left:336px;top:702px;width:33px;height:16px;background:#e4ebf7;border-right:1px solid #9fb8d3;border-bottom:1px solid #9fb8d3"></div>
<div class="gr" style="left:371px;top:702px">F231000045</div>
<div class="gr" style="left:468px;top:702px;letter-spacing:-0.2px">Facture BIGMAT BROU - Cde : C220200003</div>
<div class="abs" style="left:465px;top:78px;width:1px;height:638px;background:repeating-linear-gradient(#a0a0a0 0 1px,transparent 1px 2px)"></div>
<div class="abs" style="left:464px;top:62px;width:346px;height:1px;background:#000"></div>
<div class="abs" style="left:464px;top:62px;width:2px;height:16px;background:#000"></div>
<div class="abs" style="left:464px;top:76px;width:346px;height:2px;background:#000"></div>
<div class="abs" style="left:520px;top:71px;width:255px;height:621px;background:rgba(0,0,0,0.0);border-radius:1px"></div>
<div class="abs" style="left:518px;top:69px;width:253px;height:619px;background:#f2f2f2;border:1px solid #cccccc"></div>
<div class="mi" style="top:72px">Gestion Lignes (Maj+F3)</div>
<div class="sep" style="top:97px"></div>
<div class="mi" style="top:101px">Modification (F1)</div>
<div class="mi" style="top:123px">Suppression (F6)</div>
<div class="mi" style="top:145px">Détail (F8)</div>
<div class="mi" style="top:167px">Consultation Inf. Techniques</div>
<div class="mi dis" style="top:189px">Historique (F10)</div>
<div class="mi dis" style="top:211px">Eléments Récents (Maj+F8)</div>
<div class="mi" style="top:233px">Historique Messages / Entité</div>
<div class="mi dis" style="top:255px">Envoyer un message</div>
<div class="sep" style="top:280px"></div>
<div class="mi" style="top:284px">Nouvelle Tâche</div>
<div class="mi dis" style="top:306px">Tâches de l'Entité</div>
<div class="sep" style="top:331px"></div>
<div class="mi" style="top:335px">Joindre un document</div>
<div class="mi" style="top:357px">Documents GED</div>
<div class="sep" style="top:382px"></div>
<div class="mi" style="top:386px">Accès à ...</div>
<svg class="abs" style="left:753px;top:392px" width="8" height="9"><path d="M2 1 L5.5 4.5 L2 8" fill="none" stroke="#333" stroke-width="1.1"/></svg>
<div class="sep" style="top:411px"></div>
<div class="mi" style="top:415px">Répartition Acomptes</div>
<div class="mi" style="top:437px">Edition Facture (Ctrl+P)</div>
<div class="mi" style="top:459px">Maintenance Hiérarchie</div>
<div class="sep" style="top:484px"></div>
<div class="mi" style="top:488px">Validation Facture</div>
<div class="sep" style="top:513px"></div>
<div class="abs" style="left:521px;top:517px;width:247px;height:22px;background:#91c9f7"></div>
<div class="mi" style="top:517px">Calcul Facturation</div>
<div class="sep" style="top:542px"></div>
<div class="mi" style="top:546px">Ma Présentation de Démarrage</div>
<div class="mi" style="top:568px">Actualiser la Présentation</div>
<div class="mi" style="top:590px">Présentations</div>
<svg class="abs" style="left:753px;top:596px" width="8" height="9"><path d="M2 1 L5.5 4.5 L2 8" fill="none" stroke="#333" stroke-width="1.1"/></svg>
<div class="sep" style="top:615px"></div>
<div class="mi" style="top:619px">Définition Filtres et Tris</div>
<div class="mi" style="top:641px">Sélections Filtres et Tris</div>
<svg class="abs" style="left:753px;top:647px" width="8" height="9"><path d="M2 1 L5.5 4.5 L2 8" fill="none" stroke="#333" stroke-width="1.1"/></svg>
<div class="mi" style="top:663px">Condition par Défaut (Ctrl-F5)</div>
<svg class="abs" style="left:216px;top:189.6px" width="10.4" height="16" viewBox="0 0 13 20"><path d="M0.5 0.5 V16.5 L4.3 12.8 L7.3 18.8 L9.6 17.8 L6.7 11.8 H11.8 Z" fill="#fff" stroke="#000" stroke-width="1.1" stroke-linejoin="miter"/></svg>
<svg class="abs" style="left:745.7px;top:526.6px" width="13" height="20" viewBox="0 0 13 20"><path d="M0.5 0.5 V16.5 L4.3 12.8 L7.3 18.8 L9.6 17.8 L6.7 11.8 H11.8 Z" fill="#fff" stroke="#000" stroke-width="1.1" stroke-linejoin="miter"/></svg>
</body></html>
